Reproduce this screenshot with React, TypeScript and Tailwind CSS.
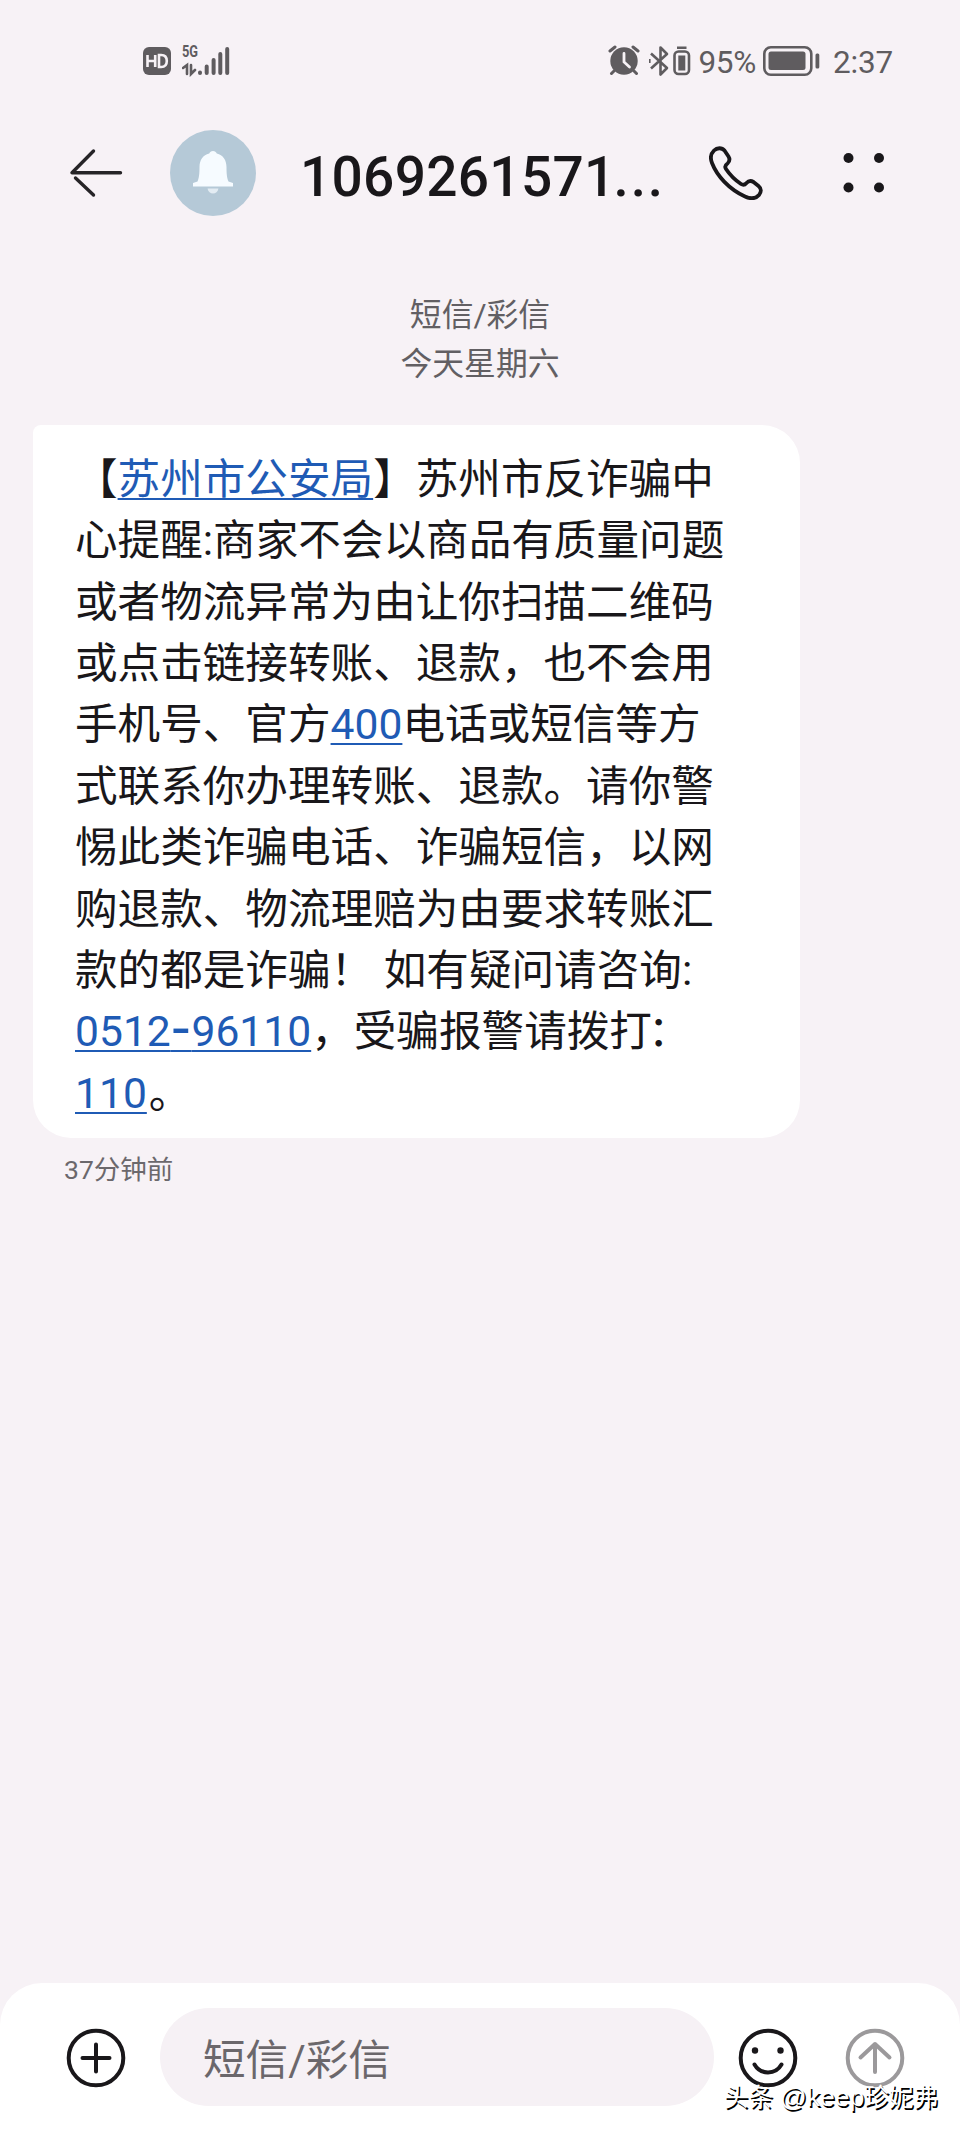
import React from "react";

const HdIcon = () => (
  <svg width="28" height="28" viewBox="0 0 28 28">
    <rect width="28" height="28" rx="6" fill="#5f5c5f" />
    <path
      d="M4.500 8v12M12.200 8v12M4.500 14h7.700M16 8v12h2.200c3.600 0 5.600-2.200 5.600-6s-2-6-5.600-6z"
      fill="none"
      stroke="#f7f2f6"
      strokeWidth="2.600"
    />
  </svg>
);

const SignalBars = () => (
  <svg width="48" height="32" viewBox="0 0 48 32" className="ml-[11px]">
    <g stroke="#5f5c5f" strokeLinecap="round" fill="none">
      <path d="M1 23l4-3v9M9 20v9l4-4" strokeWidth="2.600" />
      <path d="M18 27.500v.5M24.700 21.500v6.500M31.600 15v13M38.300 9v19M45.200 4v24" strokeWidth="4" />
    </g>
  </svg>
);

const AlarmIcon = () => (
  <svg width="32" height="32" viewBox="0 0 32 32">
    <g stroke="#5f5c5f" strokeWidth="3" strokeLinecap="round" fill="none">
      <path d="M2 6l5-4M30 6l-5-4M6 26l-2.500 2.500M26 26l2.500 2.500" />
    </g>
    <circle cx="16" cy="16" r="13.700" fill="#5f5c5f" />
    <path d="M16 8.500V17l5.500 5" fill="none" stroke="#f7f2f6" strokeWidth="2.800" strokeLinecap="round" />
  </svg>
);

const BluetoothIcon = () => (
  <svg width="42" height="32" viewBox="0 0 42 32" className="ml-[9px]">
    <g fill="none" stroke="#5f5c5f" strokeLinejoin="round">
      <path d="M2 8.500l16 14.500-6.500 6.500V2.500l6.500 6.500-16 14.500" strokeWidth="2.600" />
      <path d="M.8 14v4" strokeWidth="1.600" />
      <rect x="25.500" y="6.500" width="14.500" height="22.500" rx="4" strokeWidth="2.600" />
    </g>
    <path d="M28 1.500h9.500v2.500H28zM29.300 10.500h7v15h-7z" fill="#5f5c5f" />
  </svg>
);

const BatteryIcon = () => (
  <svg width="57" height="31" viewBox="0 0 57 31" className="ml-[7px]">
    <rect x="1.300" y="1.300" width="47" height="27.500" rx="6.500" fill="none" stroke="#5f5c5f" strokeWidth="2.600" />
    <rect x="5.500" y="5.500" width="37" height="18.500" rx="2.500" fill="#5f5c5f" />
    <rect x="52.500" y="7.500" width="3.800" height="15" rx="1.500" fill="#5f5c5f" />
  </svg>
);

const StatusBar = () => (
  <div className="flex h-[122px] items-start justify-between pt-[44px] pl-[143px] pr-[67px] text-[#5f5c5f]">
    <div className="flex h-[34px] items-center">
      <HdIcon />
      <div className="relative">
        <SignalBars />
        <span className="absolute top-[-1px] left-[11px] origin-left scale-x-[0.8] text-[16px] leading-[16px] font-bold">5G</span>
      </div>
    </div>
    <div className="flex h-[34px] items-center">
      <AlarmIcon />
      <BluetoothIcon />
      <span className="ml-[7px] pt-[3px] text-[31.500px] leading-[34px] tracking-[-0.3px]">95%</span>
      <BatteryIcon />
      <span className="ml-[13px] pt-[3px] text-[31.500px] leading-[34px] tracking-[-0.2px]">2:37</span>
    </div>
  </div>
);

const Header = () => (
  <header className="flex h-[102px] items-center pl-[69px] pr-[75px]">
    <svg width="54" height="50" viewBox="0 0 54 50" fill="none" stroke="#262427" strokeWidth="3.400" strokeLinecap="round" strokeLinejoin="round">
      <path d="M24.500 3L3 24.700h48.500M6.500 30l18 17" />
    </svg>
    <div className="ml-[47px] flex size-[86px] items-center justify-center rounded-full bg-[#b5c9d7]">
      <svg width="42" height="46" viewBox="0 0 42 46" fill="#f6fbff">
        <path d="M21 1c2 0 3 1 3.800 2.500C31 5 34.500 10 34.500 17c0 7 .5 11 2 14.500L41 33v3.500H1V33l4.500-1.500c1.500-3.500 2-7.500 2-14.500 0-7 3.500-12 9.700-13.500C18 2 19 1 21 1z" />
        <path d="M15.500 38.500h11c-.8 3.500-2.700 5-5.500 5s-4.700-1.500-5.500-5z" opacity=".7" />
      </svg>
    </div>
    <h1 className="ml-[44px] pt-[8px] text-[55px] leading-[64px] font-medium tracking-[0.3px] text-[#19171a]">
      1069261571<span className="-ml-[2px] tracking-[1.800px]">...</span>
    </h1>
    <div className="ml-auto flex items-center">
      <svg width="54" height="54" viewBox="0 0 54 54" fill="none" stroke="#19171a" strokeWidth="3.800" strokeLinejoin="round">
        <path d="M5 4.500c3-3 8-3 10.500 0l4 6c1.700 2.800 1 5-1 7-2.500 1.700-3 3.200-1.500 5.500 4 6 9 11 15 15 2.300 1.500 3.800 1 5.500-1 2-2.200 4.500-2.500 7-1l5 4c3 2.500 3 6 .5 9-3.500 4-8.500 4-14 1.500C20 43 8 30 3 17 1 12 1.500 8 5 4.500z" />
      </svg>
      <svg width="42" height="42" viewBox="0 0 42 42" fill="#19171a" className="ml-[80px]">
        <circle cx="5.500" cy="6" r="5" />
        <circle cx="36" cy="6" r="5" />
        <circle cx="5.500" cy="35.500" r="5" />
        <circle cx="36" cy="35.500" r="5" />
      </svg>
    </div>
  </header>
);

const Link = ({ children }: { children: React.ReactNode }) => (
  <span className="text-[#1f5bb5] underline decoration-2 underline-offset-[4px]">{children}</span>
);

const Message = () => (
  <div className="ml-[33px] h-[713px] w-[767px] rounded-[38px] rounded-tl-[8px] bg-white pt-[24px] pl-[42px] text-[42.600px] leading-[61.360px] whitespace-pre text-[#19171a]">
    <p>【<Link>苏州市公安局</Link>】苏州市反诈骗中</p>
    <p>心提醒:商家不会以商品有质量问题</p>
    <p>或者物流异常为由让你扫描二维码</p>
    <p>或点击链接转账、退款，也不会用</p>
    <p>手机号、官方<Link>400</Link>电话或短信等方</p>
    <p>式联系你办理转账、退款。请你警</p>
    <p>惕此类诈骗电话、诈骗短信，以网</p>
    <p>购退款、物流理赔为由要求转账汇</p>
    <p>款的都是诈骗！ 如有疑问请咨询:</p>
    <p>
      <Link>0512<span className="font-['DejaVu_Sans'] text-[56px] leading-[0] tracking-[0.5px]">-</span>96110</Link>，受骗报警请拨打<span className="-ml-[4px]">：</span>
    </p>
    <p><Link>110</Link><span className="ml-[2px]">。</span></p>
  </div>
);

const InputBar = () => (
  <footer className="relative mt-auto flex h-[150px] items-start rounded-t-[42px] bg-white pt-[25px] pl-[66px]">
    <svg width="60" height="60" viewBox="0 0 60 60" fill="none" stroke="#19171a" strokeWidth="4" strokeLinecap="round" className="mt-[20px]">
      <circle cx="30" cy="30" r="27.300" />
      <path d="M30 16.500v27M16.500 30h27" />
    </svg>
    <div className="ml-[34px] flex h-[98px] w-[554px] items-center rounded-full bg-[#f6f1f5] pt-[7px] pl-[43px] text-[42.600px] text-[#6b676b]">
      短信/彩信
    </div>
    <svg width="60" height="60" viewBox="0 0 60 60" fill="none" stroke="#19171a" strokeWidth="4" strokeLinecap="round" className="mt-[20px] ml-[24px]">
      <circle cx="30" cy="30" r="27.300" />
      <path d="M16.500 36.500c6 10.500 21 10.500 27 0" />
      <circle cx="17" cy="22.500" r="3.200" fill="#19171a" stroke="none" />
      <circle cx="42.500" cy="22.500" r="3.200" fill="#19171a" stroke="none" />
    </svg>
    <svg width="60" height="60" viewBox="0 0 60 60" fill="none" stroke="#9b999b" strokeWidth="4" strokeLinecap="round" strokeLinejoin="round" className="mt-[20px] ml-[47px]">
      <circle cx="30" cy="30" r="27.300" />
      <path d="M30 44V16M15.500 29.500L30 16l14.500 13.500" />
    </svg>
    <span className="absolute right-[22px] bottom-[18px] font-['Liberation_Sans','Noto_Sans_CJK_SC',sans-serif] text-[24.600px] leading-[34px] whitespace-nowrap text-white [text-shadow:1.500px_1.500px_0_#000]">
      头条 <span className="text-[26.500px]">@keep</span>珍妮弗
    </span>
  </footer>
);

const App = () => {
  return (
    <div className="flex h-[2133px] w-[960px] flex-col overflow-hidden bg-[#f7f2f6] font-[Roboto,'Noto_Sans_CJK_SC',sans-serif]">
      <StatusBar />
      <Header />
      <div className="mt-[67px] h-[134px] text-center text-[31.800px] leading-[49px] text-[#625f63]">
        <p>短信/彩信</p>
        <p>今天星期六</p>
      </div>
      <Message />
      <p className="mt-[13px] ml-[64px] text-[26.500px] leading-[38px] text-[#6b686c]">37分钟前</p>
      <InputBar />
    </div>
  );
};

export default App;
